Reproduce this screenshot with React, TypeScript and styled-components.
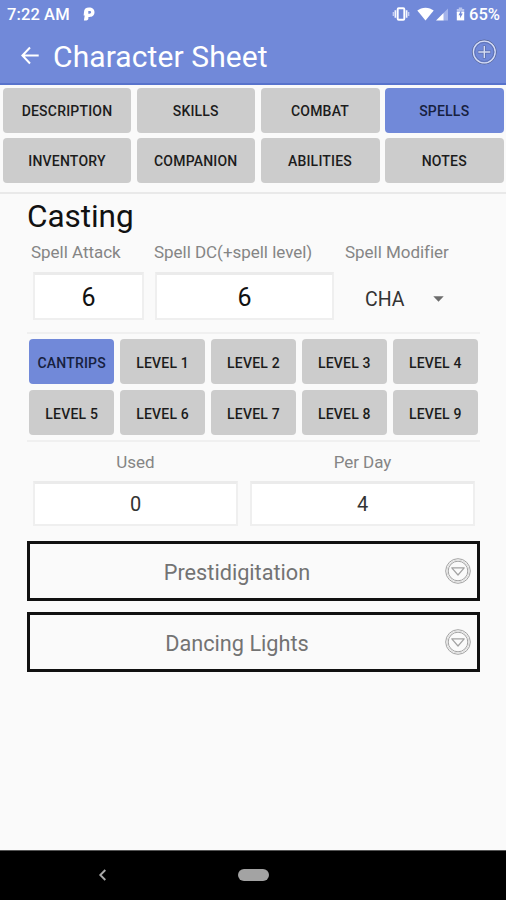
import React from "react";
import styled, { createGlobalStyle } from "styled-components";

const BLUE = "#7189d9";

const GlobalStyle = createGlobalStyle`
  * { box-sizing: border-box; }
  body { margin: 0; background: #fafafa; font-family: Roboto, "Liberation Sans", sans-serif; }
  button { font-family: inherit; border: 0; padding: 0; background: none; }
`;

const Screen = styled.div`
  width: 506px;
  height: 900px;
  display: flex;
  flex-direction: column;
  background: #fafafa;
  overflow: hidden;
`;

const Top = styled.header`
  height: 85px;
  background: ${BLUE};
  border-bottom: 2px solid #5873cc;
  color: #fff;
`;

const StatusBar = styled.div`
  height: 28px;
  display: flex;
  align-items: center;
  padding: 0 6px 0 7px;
  font-size: 16.5px;
  font-weight: 500;
  svg { display: block; }
`;

const Clock = styled.span`
  width: 76px;
  letter-spacing: 0.1px;
  white-space: nowrap;
`;

const StatusIcons = styled.div`
  margin-left: auto;
  display: flex;
  align-items: center;
`;

const Battery = styled.span`
  width: 31px;
  margin-left: 4px;
  white-space: nowrap;
`;

const TitleBar = styled.div`
  height: 55px;
  display: flex;
  align-items: center;
  padding: 0 9px 0 20px;
`;

const Title = styled.h1`
  margin: 3px auto 0 12px;
  font-size: 30px;
  line-height: 36px;
  font-weight: 400;
  letter-spacing: 0.1px;
  white-space: nowrap;
`;

const AddButton = styled.button`
  display: block;
  height: 26px;
  margin-top: -7px;
`;

const Tabs = styled.nav`
  height: 109px;
  padding: 3px 2px 0 3px;
  display: grid;
  grid-template-columns: 128px 118.5px 119px 118.5px;
  grid-template-rows: 45px 45px;
  column-gap: 5.5px;
  row-gap: 5px;
  border-bottom: 2px solid #e9e9e9;
`;

const Tab = styled.button<{ $active?: boolean }>`
  border-radius: 4px;
  background: ${(p) => (p.$active ? BLUE : "#cccccc")};
  color: ${(p) => (p.$active ? "#17213f" : "#1c1c1c")};
  font-size: 14px;
  font-weight: 500;
  letter-spacing: 0.2px;
  line-height: 20px;
  padding-top: 1px;
  white-space: nowrap;
`;

const LevelTab = styled(Tab)`
  padding-top: 2px;
`;

const Body = styled.main`
  flex: 1;
  padding: 0 26px 0 27px;
`;

const Heading = styled.h2`
  margin: 0;
  padding-top: 4px;
  height: 45px;
  font-size: 31.5px;
  line-height: 38px;
  font-weight: 400;
  letter-spacing: -0.05px;
  color: #111;
`;

const CastingRow = styled.div`
  height: 95px;
  padding-left: 6px;
  display: grid;
  grid-template-columns: 111px 179px 1fr;
  column-gap: 11px;
  border-bottom: 2px solid #f0f0f0;
`;

const Field = styled.div`
  min-width: 0;
`;

const Label = styled.div<{ $center?: boolean; $shift?: number }>`
  height: 33px;
  padding-top: ${(p) => (p.$center ? 4 : 3)}px;
  font-size: 17px;
  line-height: 20px;
  letter-spacing: -0.03px;
  color: #858585;
  white-space: nowrap;
  text-align: ${(p) => (p.$center ? "center" : "left")};
  margin-left: ${(p) => p.$shift ?? 0}px;
`;

const ValueBox = styled.div<{ $tall?: boolean }>`
  height: ${(p) => (p.$tall ? 48 : 45)}px;
  padding-top: ${(p) => (p.$tall ? 1 : 0)}px;
  display: flex;
  align-items: center;
  justify-content: center;
  background: #fff;
  border: 2px solid #efefef;
  border-top: 3px solid #ebebeb;
  color: ${(p) => (p.$tall ? "#111" : "#333")};
  font-size: ${(p) => (p.$tall ? 25 : 20)}px;
`;

const Select = styled.div`
  height: 54px;
  padding: 0 36px 0 20px;
  display: flex;
  align-items: center;
  justify-content: space-between;
  font-size: 19.5px;
  color: #333;
`;

const Levels = styled.div`
  height: 108px;
  padding: 5px 2px 0 2px;
  display: grid;
  grid-template-columns: repeat(5, 1fr);
  grid-template-rows: 45px 45px;
  column-gap: 5.5px;
  row-gap: 6px;
  border-bottom: 2px solid #f0f0f0;
`;

const UsesRow = styled.div`
  height: 99px;
  padding: 6px 5px 0 6px;
  display: grid;
  grid-template-columns: 205px 1fr;
  column-gap: 12px;
`;

const Spell = styled.div`
  height: 60px;
  margin-bottom: 11px;
  padding-right: 6px;
  display: grid;
  grid-template-columns: 36px 1fr 26px;
  align-items: center;
  border: 3px solid #111;
  font-size: 21.7px;
  color: #737373;
  text-align: center;
  svg { display: block; }
`;

const SpellName = styled.span`
  padding: 2px 37px 0 0;
  white-space: nowrap;
`;

const NavBar = styled.footer`
  height: 50px;
  background: #000;
  border-top: 1px solid #555;
  display: flex;
  align-items: center;
  padding: 0 0 2px 98px;
`;

const HomePill = styled.span`
  width: 31px;
  height: 12px;
  margin-left: 131px;
  border-radius: 6px;
  background: #a3a3a3;
`;

const ParkingIcon = () => (
  <svg width="12" height="14" viewBox="0 0 12 14">
    <path fillRule="evenodd" fill="#fff" d="M1 5C1 2 3 .6 6 .6c3.400 0 5.500 1.800 5.500 4.700S9.400 10 6.500 10H5.400v1.200c0 1.400-.8 2.200-2.200 2.200H.9L1.700 8.500H.6zM5.300 4v2.700h1.200c1 0 1.600-.5 1.600-1.400S7.500 4 6.500 4z" />
  </svg>
);

const VibrateIcon = () => (
  <svg width="18" height="14" viewBox="0 0 18 14">
    <rect x="5.700" y="1.300" width="6.600" height="11.400" rx="1" fill="none" stroke="#fff" strokeWidth="1.900" />
    <path d="M3.400 3.300v7.400M14.600 3.300v7.400" stroke="#f4f6fe" strokeWidth="1.700" />
    <path d="M1.400 5v4M16.600 5v4" stroke="#c3cdf2" strokeWidth="1.500" />
  </svg>
);

const WifiIcon = () => (
  <svg width="17" height="14" viewBox="0 0 17 14">
    <path fill="#fff" d="M.3 3.600C2.600 1.700 5.300.7 8.500.7s5.900 1 8.200 2.900L8.500 13.600z" />
  </svg>
);

const SignalIcon = () => (
  <svg width="12" height="13" viewBox="0 0 12 13">
    <path fill="#a3b3ea" d="M12 .5V12.500H7V5.500z" />
    <path fill="#fff" d="M0 12.500L7.500 5v7.500z" />
  </svg>
);

const BatteryIcon = () => (
  <svg width="9" height="14" viewBox="0 0 9 14">
    <path fill="#b9c5ef" d="M2.800.5h3.400v1.400h2V6H.8V1.900h2z" />
    <path fill="#fff" d="M.8 5h7.400v8.400H.8z" />
    <path fill={BLUE} d="M5.300 3L2.500 8.200h1.600v3L6.800 6.500H5.300z" />
  </svg>
);

const BackArrow = () => (
  <svg width="21" height="20" viewBox="0 0 21 20">
    <path d="M10 1.500L2.400 9.500l7.600 8M2.700 9.500h16" fill="none" stroke="#fff" strokeWidth="2" />
  </svg>
);

const PlusCircle = () => (
  <svg width="26" height="26" viewBox="0 0 26 26" fill="none">
    <circle cx="13.300" cy="13" r="12" stroke="#596797" strokeWidth="1" />
    <circle cx="13.300" cy="13" r="10.900" stroke="#d5dcf4" strokeWidth="1.300" />
    <circle cx="13.300" cy="13" r="9.500" stroke="#5b6da9" strokeWidth=".8" />
    <path d="M13.300 6.500v13M6.800 13h13" stroke="#5b6da9" strokeWidth="2.800" />
    <path d="M13.300 7v12M7.300 13h12" stroke="#d5dcf4" strokeWidth="1.400" />
  </svg>
);

const ExpandIcon = () => (
  <svg width="26" height="26" viewBox="0 0 26 26" fill="none" stroke="#a2a2a2">
    <circle cx="13" cy="13" r="12.300" strokeWidth="1" />
    <circle cx="13" cy="13" r="9.800" strokeWidth="1" />
    <circle cx="13" cy="13" r="11" stroke="#ddd" strokeWidth="1" />
    <path d="M6.800 9.800h12.400L13 17z" strokeWidth="1.200" strokeLinejoin="round" />
  </svg>
);

const CaretIcon = () => (
  <svg width="11" height="6" viewBox="0 0 11 6">
    <path d="M.3.300h10.400L5.500 5.700z" fill="#6c6c6c" />
  </svg>
);

const NavBack = () => (
  <svg width="9" height="12" viewBox="0 0 9 12">
    <path d="M7.300 1L2.300 6l5 5" fill="none" stroke="#aaa" strokeWidth="1.900" />
  </svg>
);

const Icons = styled.div`
  display: flex;
  align-items: center;
  gap: 7px;
`;

const SignalGroup = styled.div`
  display: flex;
  align-items: flex-end;
  gap: 2px;
  margin-right: 1px;
`;

const TABS = ["DESCRIPTION", "SKILLS", "COMBAT", "SPELLS", "INVENTORY", "COMPANION", "ABILITIES", "NOTES"];
const LEVELS = ["CANTRIPS", ...Array.from({ length: 9 }, (_, i) => `LEVEL ${i + 1}`)];
const SPELLS = ["Prestidigitation", "Dancing Lights"];

export default function App() {
  return (
    <Screen>
      <GlobalStyle />
      <Top>
        <StatusBar>
          <Clock>7:22 AM</Clock>
          <ParkingIcon />
          <StatusIcons>
            <Icons>
              <VibrateIcon />
              <SignalGroup>
                <WifiIcon />
                <SignalIcon />
              </SignalGroup>
              <BatteryIcon />
            </Icons>
            <Battery>65%</Battery>
          </StatusIcons>
        </StatusBar>
        <TitleBar>
          <BackArrow />
          <Title>Character Sheet</Title>
          <AddButton aria-label="Add">
            <PlusCircle />
          </AddButton>
        </TitleBar>
      </Top>
      <Tabs>
        {TABS.map((t) => (
          <Tab key={t} $active={t === "SPELLS"}>{t}</Tab>
        ))}
      </Tabs>
      <Body>
        <Heading>Casting</Heading>
        <CastingRow>
          <Field>
            <Label $shift={-2}>Spell Attack</Label>
            <ValueBox $tall>6</ValueBox>
          </Field>
          <Field>
            <Label $shift={-1}>Spell DC(+spell level)</Label>
            <ValueBox $tall>6</ValueBox>
          </Field>
          <Field>
            <Label>Spell Modifier</Label>
            <Select>
              CHA
              <CaretIcon />
            </Select>
          </Field>
        </CastingRow>
        <Levels>
          {LEVELS.map((l) => (
            <LevelTab key={l} $active={l === "CANTRIPS"}>{l}</LevelTab>
          ))}
        </Levels>
        <UsesRow>
          <Field>
            <Label $center>Used</Label>
            <ValueBox>0</ValueBox>
          </Field>
          <Field>
            <Label $center>Per Day</Label>
            <ValueBox>4</ValueBox>
          </Field>
        </UsesRow>
        {SPELLS.map((s) => (
          <Spell key={s}>
            <span />
            <SpellName>{s}</SpellName>
            <ExpandIcon />
          </Spell>
        ))}
      </Body>
      <NavBar>
        <NavBack />
        <HomePill />
      </NavBar>
    </Screen>
  );
}
